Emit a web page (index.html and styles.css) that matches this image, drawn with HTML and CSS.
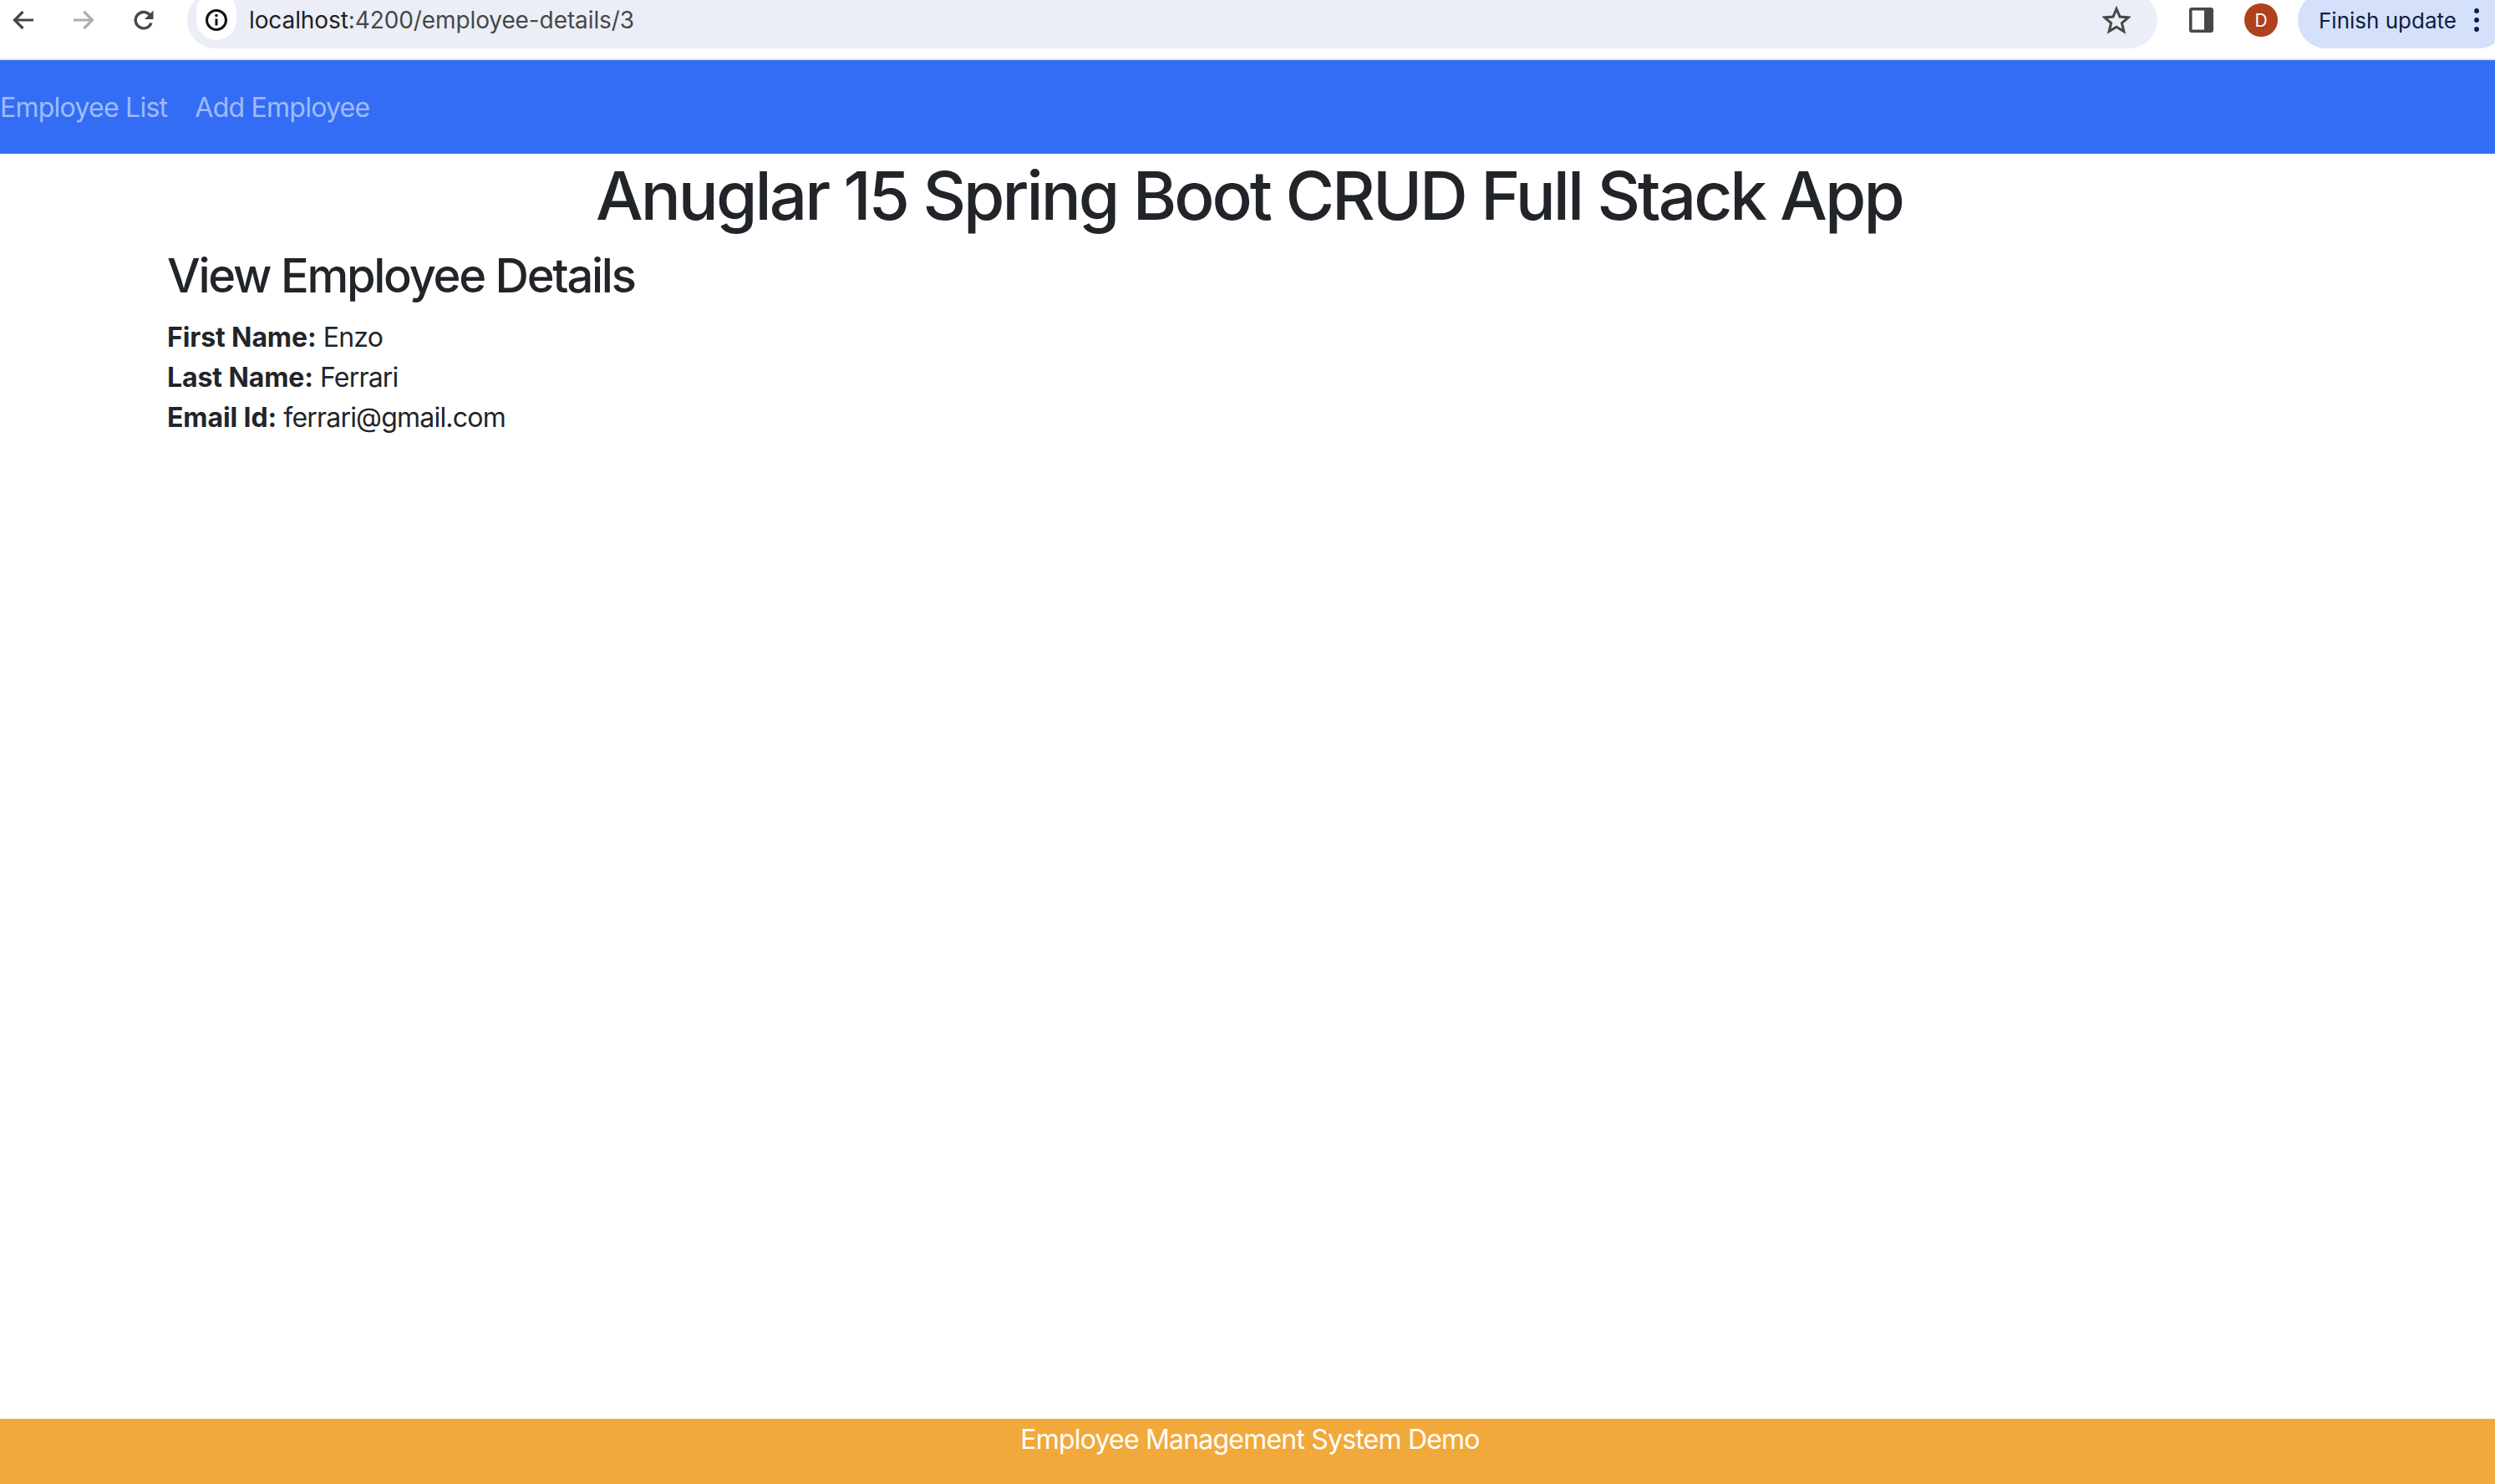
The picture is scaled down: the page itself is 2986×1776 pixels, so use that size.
FILE: index.html
```html
<!DOCTYPE html>
<html lang="en">
<head>
<meta charset="utf-8">
<title>Employee Management System</title>
<link rel="stylesheet" href="styles.css">
</head>
<body>
<div class="page">
  <header class="toolbar">
    <div class="nav-icons">
      <svg class="tool-icon" viewBox="0 0 26 24"><path d="M25 12H3M12.500 2 2.500 12l10 10" fill="none" stroke="#474747" stroke-width="3.200"/></svg>
      <svg class="tool-icon" viewBox="0 0 26 24"><path d="M1 12h22M13.500 2l10 10-10 10" fill="none" stroke="#adadad" stroke-width="3.200"/></svg>
      <svg class="tool-icon" viewBox="0 0 26 24"><path d="M22 15.500A9.700 9.700 0 1 1 20 5.500" fill="none" stroke="#474747" stroke-width="3.400"/><path d="M24.500 .5v10.500h-10.500z" fill="#474747"/></svg>
    </div>
    <div class="omnibox">
      <span class="site-info">
        <svg class="info-icon" viewBox="0 0 28 28"><circle cx="14" cy="14" r="11.500" fill="none" stroke="#111" stroke-width="3"/><path d="M14 12.500v8" stroke="#111" stroke-width="3"/><circle cx="14" cy="8.500" r="1.800" fill="#111"/></svg>
      </span>
      <span class="url"><span class="url-host">localhost</span>:4200/employee-details/3</span>
      <svg class="star" viewBox="0 0 34 34"><path d="M17 3.500l4 9.600 10.300.8-7.900 6.700 2.500 10-8.900-5.400-8.900 5.400 2.500-10-7.900-6.700 10.300-.8z" fill="none" stroke="#474747" stroke-width="3"/></svg>
    </div>
    <svg class="panel-icon" viewBox="0 0 29 30"><rect x="0" y="0" width="29" height="30" rx="3" fill="#474747"/><rect x="3.500" y="3.500" width="14.500" height="23" fill="#fff"/></svg>
    <span class="avatar">D</span>
    <div class="update">
      <span class="update-label">Finish update</span>
      <svg class="kebab" viewBox="0 0 6 28"><circle cx="3" cy="3" r="2.900"/><circle cx="3" cy="14" r="2.900"/><circle cx="3" cy="25" r="2.900"/></svg>
    </div>
  </header>

  <nav class="appnav">
    <a class="appnav-link" href="#">Employee List</a>
    <a class="appnav-link" href="#">Add Employee</a>
  </nav>

  <main class="content">
    <h1 class="title">Anuglar 15 Spring Boot CRUD Full Stack App</h1>
    <section class="details">
      <h3 class="details-title">View Employee Details</h3>
      <div class="field"><strong>First Name:</strong> Enzo</div>
      <div class="field"><strong>Last Name:</strong> Ferrari</div>
      <div class="field"><strong>Email Id:</strong> ferrari@gmail.com</div>
    </section>
  </main>

  <footer class="footer">Employee Management System Demo</footer>
</div>
</body>
</html>
```
FILE: styles.css
```css
* { box-sizing: border-box; }
html, body { margin: 0; padding: 0; }
body {
  font-family: Inter, "Liberation Sans", sans-serif;
  color: #212529;
  background: #fff;
}
.page {
  display: flex;
  flex-direction: column;
  height: 100vh;
  overflow: hidden;
}
.toolbar {
  display: flex;
  align-items: center;
  height: 72px;
  flex: none;
  overflow: hidden;
  padding-bottom: 22px;
  border-bottom: 2px solid #e4e4e4;
  background: #fff;
}
.nav-icons {
  display: flex;
  align-items: center;
  gap: 46px;
  margin-left: 15px;
  width: 209px;
  flex: none;
}
.tool-icon { width: 26px; height: 24px; flex: none; }
.omnibox {
  display: flex;
  align-items: center;
  width: 2358px;
  height: 68px;
  flex: none;
  padding-left: 11px;
  padding-right: 32px;
  border-radius: 34px;
  background: #ebeef6;
}
.site-info {
  display: flex;
  align-items: center;
  justify-content: center;
  width: 48px;
  height: 58px;
  margin-top: -10px;
  border-radius: 24px;
  background: #fff;
  flex: none;
}
.info-icon { width: 28px; height: 28px; margin-top: 10px; }
.url {
  margin-left: 15px;
  font-size: 28px;
  letter-spacing: -0.1px;
  color: #474747;
  white-space: nowrap;
  flex: 1;
}
.url-host { color: #1f1f1f; }
.star { width: 34px; height: 34px; flex: none; }
.panel-icon { width: 29px; height: 30px; flex: none; margin-left: 38px; }
.avatar {
  display: flex;
  align-items: center;
  justify-content: center;
  width: 40px;
  height: 40px;
  margin-left: 37px;
  border-radius: 50%;
  background: #b0411e;
  color: #fff;
  font-size: 21px;
  flex: none;
}
.update {
  display: flex;
  align-items: center;
  width: 250px;
  height: 68px;
  margin-left: 24px;
  padding-left: 25px;
  border-radius: 34px;
  background: #d5e1fa;
  color: #0b1d47;
  flex: none;
}
.update-label { font-size: 26px; white-space: nowrap; }
.kebab { width: 6px; height: 28px; margin-left: 21px; fill: #0b1d47; }
.appnav {
  display: flex;
  align-items: center;
  gap: 33px;
  height: 112px;
  flex: none;
  background: #336df5;
}
.appnav-link {
  font-size: 32px;
  letter-spacing: -0.75px;
  color: rgba(255, 255, 255, 0.55);
  text-decoration: none;
}
.content { flex: 1; min-height: 0; }
.title {
  margin: 0;
  padding: 2px 0 0 4px;
  font-size: 80px;
  font-weight: 500;
  letter-spacing: -3px;
  line-height: 96px;
  text-align: center;
}
.details { padding: 15px 200px 0; }
.details-title {
  margin: 0 0 16px;
  font-size: 56px;
  font-weight: 500;
  letter-spacing: -2.25px;
  line-height: 67px;
}
.field { font-size: 32px; letter-spacing: -0.8px; line-height: 48px; }
.field strong { font-weight: 700; letter-spacing: -0.1px; }
.footer {
  height: 78px;
  flex: none;
  padding: 1px 0 0 6px;
  background: #f2a93b;
  color: #fff;
  font-size: 32px;
  letter-spacing: -0.8px;
  line-height: 48px;
  text-align: center;
}
```
